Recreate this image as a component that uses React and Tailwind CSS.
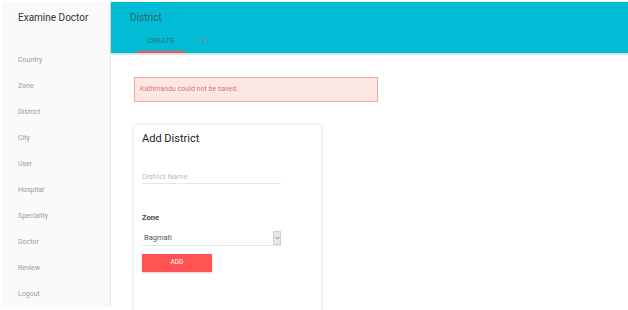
export default function App() {
  const items = ["Country", "Zone", "District", "City", "User", "Hospital", "Speciality", "Doctor", "Review", "Logout"];
  return (
    <div className="w-[628px] h-[310px] bg-white overflow-hidden pt-[2px] pl-[2px] flex" style={{ fontFamily: "Roboto, 'Liberation Sans', Arial, sans-serif" }}>
      <aside className="w-[109px] h-[305px] bg-[#fafafa] border-r border-[#e6e6e6] shrink-0 flex flex-col">
        <div className="h-[31px] pl-[16px] flex items-center text-[10px] text-[#333]">Examine Doctor</div>
        <nav className="pt-[14px] flex flex-col">
          {items.map((t) => (
            <div key={t} className="h-[26px] pl-[16px] flex items-center text-[7px] text-[#9a9a9a]">{t}</div>
          ))}
        </nav>
      </aside>
      <main className="flex-1 flex flex-col">
        <header className="h-[51px] bg-[#00bcd4] shadow-[0_1px_2px_rgba(0,0,0,0.25)] flex flex-col">
          <div className="h-[31px] pl-[19px] flex items-center text-[10px] text-[#35606a]">District</div>
          <div className="flex pl-[26px] h-[20px]">
            <div className="w-[48px] flex flex-col items-center justify-end">
              <span className="text-[7.5px] text-[#3b6d76] pb-[5px]">CREATE</span>
              <div className="w-full h-[2px] bg-[#ff5252]"></div>
            </div>
            <div className="w-[35px] flex flex-col items-center justify-end">
              <span className="text-[7.5px] text-[#58959f] pb-[7px]">LIST</span>
            </div>
          </div>
        </header>
        <div className="pl-[23px] pt-[24px]">
          <div className="w-[244px] h-[25px] bg-[#fde7e3] border border-[#e8aaa3] flex items-center pl-[5px] text-[7px] text-[#e57373]">
            Kathmandu could not be saved.
          </div>
          <div className="mt-[23px] w-[187px] h-[200px] bg-white shadow-[0_0_3px_rgba(0,0,0,0.15)] pl-[8px] pt-[7px]">
            <div className="text-[11px] text-[#222] leading-[14px]">Add District</div>
            <div className="mt-[26px] w-[139px] border-b border-[#e8e8e8] pb-[1px] text-[7.5px] leading-[10px] text-[#bdbdbd]">District Name</div>
            <div className="mt-[29px] text-[7.5px] leading-[10px] font-bold text-[#444]">Zone</div>
            <div className="mt-[8px] w-[139px] h-[15px] border-b border-[#e6e6e6] flex items-center justify-between">
              <span className="pl-[2px] text-[7.5px] text-[#555]">Bagmati</span>
              <div className="w-[8px] h-[14px] bg-[#e8e8e8] border border-[#cfcfcf] flex items-center justify-center">
                <svg width="5" height="4" viewBox="0 0 5 4"><path d="M0.5 1 L2.5 3 L4.5 1" fill="none" stroke="#666" strokeWidth="0.8" /></svg>
              </div>
            </div>
            <div className="mt-[8px] w-[70px] h-[18px] bg-[#ff5252] shadow-[0_1px_2px_rgba(0,0,0,0.2)] flex items-center justify-center text-[6.5px] text-white">ADD</div>
          </div>
        </div>
      </main>
    </div>
  );
}
